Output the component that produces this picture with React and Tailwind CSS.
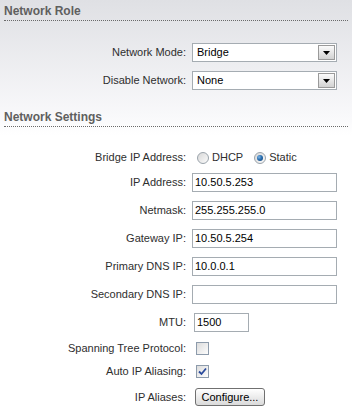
import React from "react";

const Heading = ({ children }) => (
  <div>
    <h2 className="text-[12px] font-bold leading-[16px] text-[#5f5f5f]">{children}</h2>
    <div className="mt-[1px] border-b border-dotted border-[#6a6a6a]" />
  </div>
);

const Row = ({ label, children }) => (
  <div className="flex items-center">
    <div className="w-[186px] shrink-0 text-right leading-[13px] text-[#2e2e2e]">{label}</div>
    <div className="flex items-center">{children}</div>
  </div>
);

const Select = ({ value }) => (
  <div className="ml-[6px] flex h-[19px] w-[145px] items-center justify-between border border-[#a5acb2] bg-white">
    <span className="pl-[4px] leading-[13px] text-black">{value}</span>
    <div className="mr-[1px] flex h-[15px] w-[17px] items-center justify-center border border-[#9a9a9a] bg-gradient-to-b from-[#fbfbfb] to-[#d2d2d2]">
      <svg width="7" height="4" viewBox="0 0 7 4">
        <polygon points="0,0 7,0 3.5,4" fill="#000" />
      </svg>
    </div>
  </div>
);

const TextInput = ({ value, className = "ml-[6px] w-[145px]" }) => (
  <div className={`${className} flex h-[19px] items-center border border-[#a5acb2] bg-white`}>
    <span className="pl-[2px] leading-[13px] text-black">{value}</span>
  </div>
);

const Radio = ({ checked }) => (
  <div className="flex h-[12px] w-[12px] items-center justify-center rounded-full border border-[#9aa3ab] bg-gradient-to-br from-[#d8d8d8] to-[#fbfbfb]">
    {checked && (
      <div className="h-[6px] w-[6px] rounded-full bg-[radial-gradient(circle_at_35%_35%,#7fb6e6_0%,#2a6fb0_45%,#123e6e_100%)]" />
    )}
  </div>
);

const Checkbox = ({ checked }) => (
  <div className="ml-[10px] flex h-[13px] w-[13px] items-center justify-center border border-[#8d9bab] bg-gradient-to-br from-[#dcdcdc] to-[#fdfdfd]">
    {checked && (
      <svg width="9" height="9" viewBox="0 0 9 9">
        <path d="M1 4.5 L3.5 7 L8 1.5" stroke="#2a4a9c" strokeWidth="1.8" fill="none" />
      </svg>
    )}
  </div>
);

export default function App() {
  return (
    <div className="h-[416px] w-[352px] overflow-hidden bg-[linear-gradient(to_bottom,#dfe0e4_0px,#f9f9fb_118px,#ffffff_135px)] px-[4px] pt-[3px] font-['Liberation_Sans',Arial,sans-serif] text-[11px]">
      <Heading>Network Role</Heading>

      <div className="-ml-[4px] mt-[22px] flex flex-col gap-[9px]">
        <Row label="Network Mode:">
          <Select value="Bridge" />
        </Row>
        <Row label="Disable Network:">
          <Select value="None" />
        </Row>
      </div>

      <div className="mt-[19px]">
        <Heading>Network Settings</Heading>
      </div>

      <div className="-ml-[4px] mt-[24px] flex flex-col gap-[9px]">
        <Row label="Bridge IP Address:">
          <div className="ml-[11px] flex items-center gap-[3px]">
            <Radio />
            <span className="leading-[13px] text-[#2e2e2e]">DHCP</span>
          </div>
          <div className="ml-[11px] flex items-center gap-[3px]">
            <Radio checked />
            <span className="leading-[13px] text-[#2e2e2e]">Static</span>
          </div>
        </Row>
        <Row label="IP Address:">
          <TextInput value="10.50.5.253" />
        </Row>
        <Row label="Netmask:">
          <TextInput value="255.255.255.0" />
        </Row>
        <Row label="Gateway IP:">
          <TextInput value="10.50.5.254" />
        </Row>
        <Row label="Primary DNS IP:">
          <TextInput value="10.0.0.1" />
        </Row>
        <Row label="Secondary DNS IP:">
          <TextInput value="" />
        </Row>
        <Row label="MTU:">
          <TextInput value="1500" className="ml-[8px] w-[55px]" />
        </Row>
        <div className="flex flex-col gap-[10px] pt-[1px]">
          <Row label="Spanning Tree Protocol:">
            <Checkbox />
          </Row>
          <Row label="Auto IP Aliasing:">
            <Checkbox checked />
          </Row>
          <Row label="IP Aliases:">
            <button className="ml-[9px] h-[18px] w-[70px] rounded-[3px] border border-[#707070] bg-gradient-to-b from-[#ffffff] to-[#dadada] text-[11px] leading-[13px] text-black">
              Configure...
            </button>
          </Row>
        </div>
      </div>
    </div>
  );
}
